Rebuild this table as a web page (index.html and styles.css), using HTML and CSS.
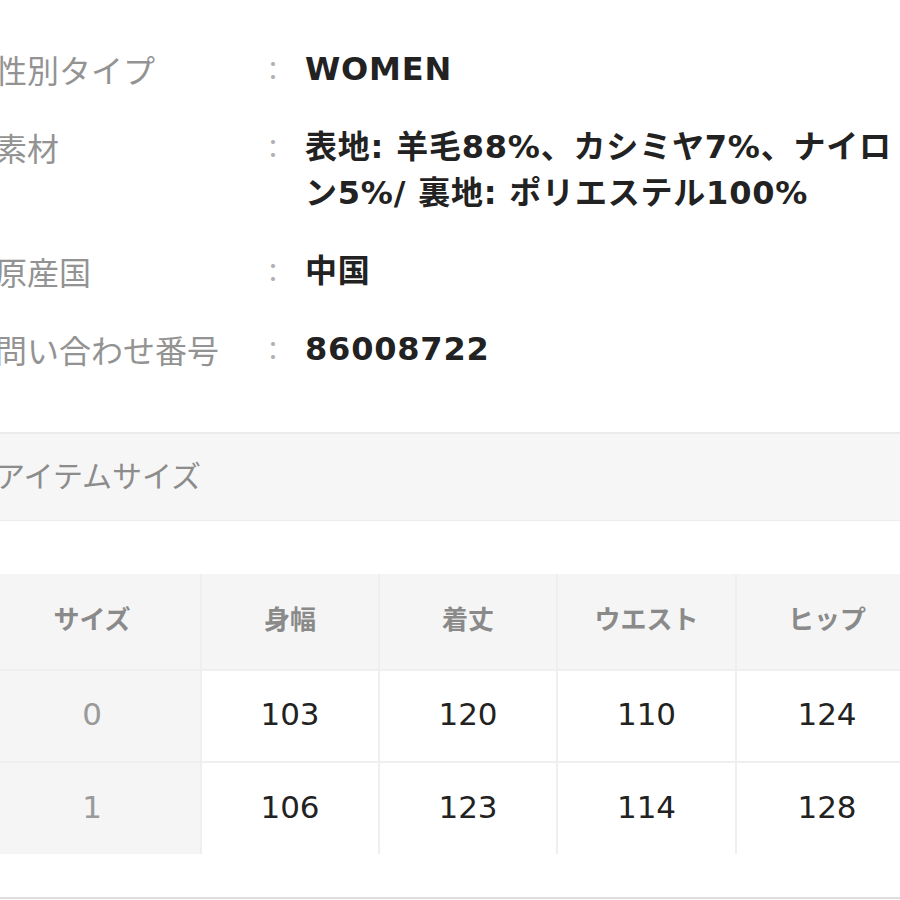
FILE: index.html
```html
<!DOCTYPE html>
<html lang="ja">
<head>
<meta charset="utf-8">
<title>商品詳細</title>
<link rel="stylesheet" href="styles.css">
</head>
<body>
<div class="page">
  <dl class="specs">
    <div class="spec">
      <dt class="spec-label">性別タイプ</dt>
      <dd class="spec-sep">：</dd>
      <dd class="spec-value">WOMEN</dd>
    </div>
    <div class="spec">
      <dt class="spec-label">素材</dt>
      <dd class="spec-sep">：</dd>
      <dd class="spec-value">表地: 羊毛88%、カシミヤ7%、ナイロン5%/ 裏地: ポリエステル100%</dd>
    </div>
    <div class="spec">
      <dt class="spec-label">原産国</dt>
      <dd class="spec-sep">：</dd>
      <dd class="spec-value">中国</dd>
    </div>
    <div class="spec">
      <dt class="spec-label">問い合わせ番号</dt>
      <dd class="spec-sep">：</dd>
      <dd class="spec-value">86008722</dd>
    </div>
  </dl>

  <h2 class="section-head">アイテムサイズ</h2>

  <div class="size-wrap">
    <div class="size-table">
      <div class="cell head">サイズ</div>
      <div class="cell head">身幅</div>
      <div class="cell head">着丈</div>
      <div class="cell head">ウエスト</div>
      <div class="cell head">ヒップ</div>

      <div class="cell size">0</div>
      <div class="cell">103</div>
      <div class="cell">120</div>
      <div class="cell">110</div>
      <div class="cell">124</div>

      <div class="cell size">1</div>
      <div class="cell">106</div>
      <div class="cell">123</div>
      <div class="cell">114</div>
      <div class="cell">128</div>
    </div>
  </div>
</div>
</body>
</html>
```
FILE: styles.css
```css
html, body {
  margin: 0;
  padding: 0;
  background: #ffffff;
  overflow: hidden;
}

body {
  font-family: "Noto Sans CJK JP", "Noto Sans", sans-serif;
  color: #222222;
}

.page {
  margin-left: -16px;
  width: 940px;
}

.specs {
  margin: 0;
  padding: 46px 0 0 11px;
  display: flex;
  flex-direction: column;
  gap: 32px;
}

.spec {
  display: grid;
  grid-template-columns: 262px 32px 616px;
  font-size: 32px;
  line-height: 46px;
}

.spec-label {
  color: #939393;
  font-weight: 400;
  white-space: nowrap;
}

.spec-sep {
  margin: 0;
  color: #b0b0b0;
  text-align: center;
  font-size: 26px;
}

.spec-value {
  margin: 0;
  padding-left: 16px;
  font-family: "DejaVu Sans", "Noto Sans CJK JP", sans-serif;
  font-weight: 700;
  letter-spacing: 0.8px;
  color: #222222;
}

.section-head {
  margin: 60px 0 0;
  height: 89px;
  padding-left: 11px;
  padding-bottom: 6px;
  box-sizing: border-box;
  display: flex;
  align-items: center;
  background: #f6f6f6;
  border-top: 2px solid #ebebeb;
  border-bottom: 1px solid #ededed;
  font-size: 30px;
  font-weight: 400;
  color: #8c8c8c;
}

.size-wrap {
  margin-top: 53px;
  padding-bottom: 43px;
  border-bottom: 2px solid #dedede;
}

.size-table {
  display: grid;
  grid-template-columns: 216px 176px 176px 177px 180px;
  grid-template-rows: 95px 90px 91px;
  gap: 2px;
  background: #efefef;
}

.cell {
  display: flex;
  align-items: center;
  justify-content: center;
  background: #ffffff;
  font-family: "DejaVu Sans", "Noto Sans CJK JP", sans-serif;
  font-size: 31px;
  font-weight: 400;
  color: #222222;
  padding-bottom: 4px;
  box-sizing: border-box;
}

.cell.head {
  background: #f5f5f5;
  color: #8a8a8a;
  font-family: "Noto Sans CJK JP", sans-serif;
  font-size: 26px;
  font-weight: 700;
  padding-bottom: 8px;
}

.cell.size {
  background: #f5f5f5;
  color: #9a9a9a;
}
```
